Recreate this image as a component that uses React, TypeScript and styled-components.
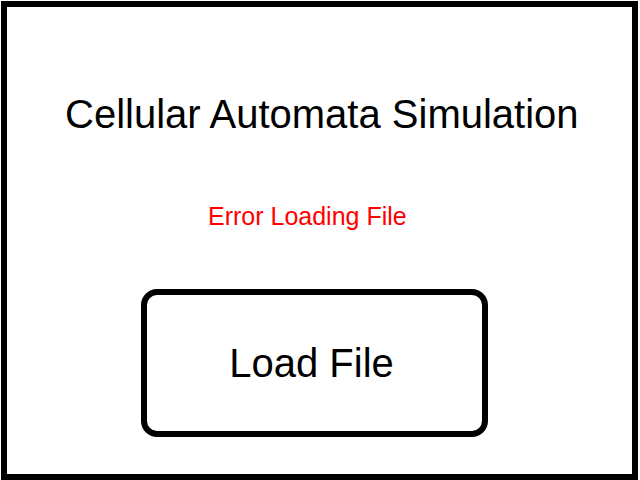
import React from "react";
import styled, { createGlobalStyle } from "styled-components";

const Global = createGlobalStyle`
  html, body { margin: 0; padding: 0; background: #fff; }
  body { font-family: "Liberation Sans", Arial, sans-serif; }
`;

const Frame = styled.div`
  box-sizing: border-box;
  margin: 1px 2px 0 1px;
  width: 637px;
  height: 479px;
  border: 6px solid #000;
  background: #fff;
  display: flex;
  flex-direction: column;
  align-items: flex-start;
`;

const Title = styled.h1`
  margin: 87px 0 0 58px;
  font-size: 40px;
  font-weight: normal;
  line-height: 40px;
  color: #000;
  white-space: nowrap;
`;

const ErrorText = styled.div`
  margin: 70px 0 0 201px;
  font-size: 25px;
  line-height: 24px;
  color: #ff0000;
  white-space: nowrap;
`;

const LoadButton = styled.button`
  box-sizing: border-box;
  margin: 61px 0 0 134px;
  width: 347px;
  height: 148px;
  padding: 0 6px 0 0;
  border: 6px solid #000;
  border-radius: 16px;
  background: #fff;
  font-family: "Liberation Sans", Arial, sans-serif;
  font-size: 40px;
  line-height: 40px;
  color: #000;
  cursor: pointer;
`;

export default function App() {
  return (
    <>
      <Global />
      <Frame>
        <Title>Cellular Automata Simulation</Title>
        <ErrorText>Error Loading File</ErrorText>
        <LoadButton>Load File</LoadButton>
      </Frame>
    </>
  );
}
